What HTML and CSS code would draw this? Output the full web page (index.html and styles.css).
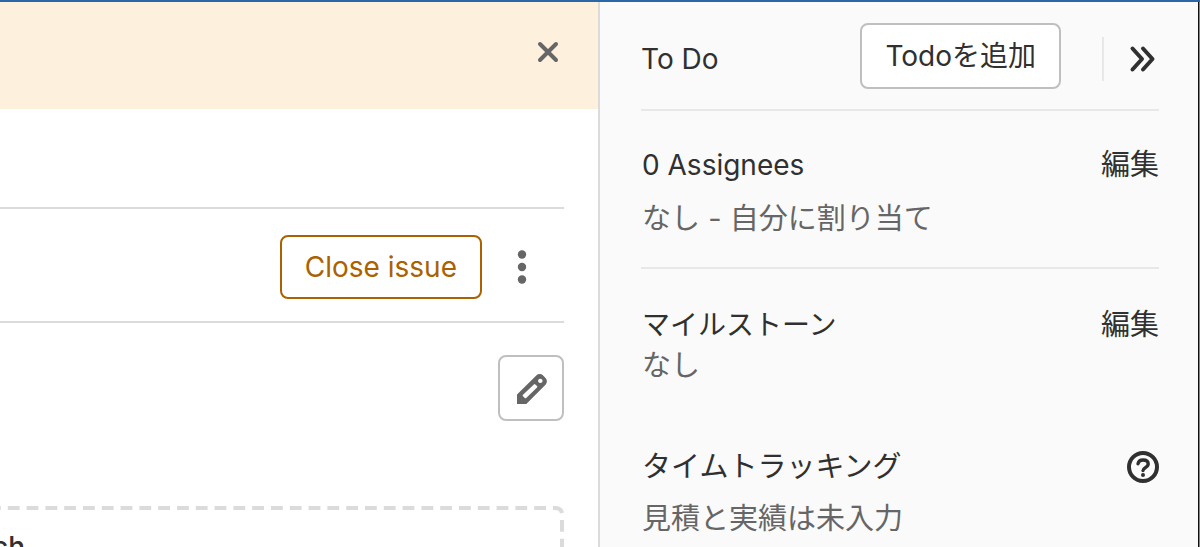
FILE: index.html
```html
<!DOCTYPE html>
<html lang="ja">
<head>
<meta charset="utf-8">
<title>Issue</title>
<link rel="stylesheet" href="styles.css">
</head>
<body>
<div class="app">
  <main class="content">
    <div class="alert">
      <button class="icon-button" aria-label="Close">
        <svg width="32" height="32" viewBox="0 0 32 32"><path d="M8 8l16 16M24 8L8 24" fill="none" stroke="currentColor" stroke-width="4" stroke-linecap="round"/></svg>
      </button>
    </div>
    <div class="issue">
      <div class="issue-actions">
        <button class="button button-warning">Close issue</button>
        <button class="icon-button" aria-label="More actions">
          <svg width="32" height="40" viewBox="0 0 32 40"><g fill="currentColor"><circle cx="16" cy="7.5" r="4.2"/><circle cx="16" cy="20" r="4.2"/><circle cx="16" cy="32.5" r="4.2"/></g></svg>
        </button>
      </div>
      <div class="issue-title">
        <button class="button button-square" aria-label="Edit">
          <svg width="32" height="32" viewBox="0 0 32 32"><path fill="currentColor" fill-rule="evenodd" d="M2 32v-9.500L21.300 3.500a4.800 4.800 0 0 1 6.800 0l2.400 2.400a4.800 4.800 0 0 1 0 6.800L11.300 32zM8 24.200l1.800 1.800a1 1 0 0 0 1.400 0L22 15.500a1 1 0 0 0 0-1.400l-1.700-1.700a1 1 0 0 0-1.400 0L8 22.800a1 1 0 0 0 0 1.400zM25.300 6.700a2.200 2.200 0 1 0 .01 0z"/></svg>
        </button>
      </div>
      <section class="upload">
        <svg class="upload-outline" width="564" height="60" viewBox="0 0 564 60"><g fill="none" stroke="#dbdbdb" stroke-width="4"><path d="M546 2H0" stroke-dasharray="11.8 7"/><path d="M553 2h2q6 0 7 5"/><path d="M562 14V60" stroke-dasharray="11.8 7"/></g></svg>
        <p class="upload-text">ch</p>
      </section>
    </div>
  </main>
  <aside class="sidebar">
    <header class="block todo">
      <span class="todo-label">To Do</span>
      <button class="button">Todoを追加</button>
      <button class="icon-button collapse" aria-label="Collapse sidebar">
        <svg width="32" height="32" viewBox="0 0 32 32"><path d="M5.500 5.500L15 16 5.500 26.500M16 5.500L25.500 16 16 26.500" fill="none" stroke="currentColor" stroke-width="4" stroke-linecap="round" stroke-linejoin="round"/></svg>
      </button>
    </header>
    <section class="block assignees">
      <div class="row"><span>0 Assignees</span><a href="#">編集</a></div>
      <p class="value">なし - 自分に割り当て</p>
    </section>
    <section class="block milestone">
      <div class="row"><span>マイルストーン</span><a href="#">編集</a></div>
      <p class="value">なし</p>
    </section>
    <section class="block tracking">
      <div class="row"><span class="wide">タイムトラッキング</span>
        <button class="icon-button help" aria-label="Help">
          <svg width="32" height="32" viewBox="0 0 32 32"><circle cx="16" cy="16" r="14" fill="none" stroke="currentColor" stroke-width="4"/><path d="M11 12.800C11.500 10.200 13.300 9 16 9c3.200 0 5.200 1.500 5.200 4 0 3.500-5.200 3.600-5.200 6.500" fill="none" stroke="currentColor" stroke-width="3.400" stroke-linecap="round"/><circle cx="16" cy="24" r="2" fill="currentColor"/></svg>
        </button>
      </div>
      <p class="value">見積と実績は未入力</p>
    </section>
  </aside>
  <div class="edge"></div>
</div>
</body>
</html>
```
FILE: styles.css
```css
* { box-sizing: border-box; }

body {
  margin: 0;
  overflow: hidden;
  background: #fff;
  color: #303030;
  font: 28px/40px Inter, "Noto Sans CJK JP", sans-serif;
}

p { margin: 0; }
a { color: inherit; text-decoration: none; }
svg { display: block; }

.app {
  display: flex;
  height: 100vh;
  overflow: hidden;
  border-top: 2px solid #2a66a8;
}

.content { flex: 1; min-width: 0; }

.alert {
  display: flex;
  justify-content: flex-end;
  padding: 34px 34px 41px;
  background: #fdf0dd;
}

.icon-button {
  padding: 0;
  border: 0;
  background: none;
  color: #666;
}

.button {
  height: 66px;
  padding: 0 23px;
  border: 2px solid #bfbfbf;
  border-radius: 8px;
  background: #fff;
  color: inherit;
  font: inherit;
}

.button-warning {
  height: 64px;
  border-color: #ab6100;
  color: #ab6100;
}

.button-square {
  width: 66px;
  padding: 0 15px;
  color: #666;
}

.issue { padding: 98px 34px 0 0; }

.issue-actions {
  display: flex;
  align-items: center;
  justify-content: flex-end;
  gap: 24px;
  height: 116px;
  padding: 4px 26px 0 0;
  border-top: 2px solid #dbdbdb;
  border-bottom: 2px solid #dbdbdb;
}

.issue-title {
  display: flex;
  justify-content: flex-end;
  padding: 32px 0 85px;
}

.upload {
  position: relative;
  height: 60px;
  padding-top: 21px;
  overflow: hidden;
}

.upload-outline { position: absolute; top: 0; right: 0; }

.upload-text { margin-left: -8px; font-weight: 500; }

.sidebar {
  width: 600px;
  padding: 0 39px 0 41px;
  border-left: 2px solid #dbdbdb;
  background: #fafafa;
}

.block { border-bottom: 2px solid #e8e8e8; }

.todo {
  display: flex;
  align-items: center;
  height: 109px;
  padding-top: 6px;
}

.todo .button { margin-bottom: 6px; }

.todo-label { flex: 1; }

.collapse {
  margin-left: 41px;
  padding: 6px 0 6px 23px;
  border-left: 2px solid #e8e8e8;
  color: #303030;
}

.row {
  display: flex;
  align-items: center;
  justify-content: space-between;
  padding-left: 1px;
}

.row a, .row .wide, .value { font-size: 29px; }

.value { padding-left: 1px; color: #666; }

.assignees { padding: 34px 0 28px; }
.assignees .value { margin-top: 14px; }
.milestone { padding: 36px 0 0; border: 0; }
.milestone .value { margin-top: 1px; }
.tracking { padding-top: 61px; border: 0; }
.tracking .value { margin-top: 12px; }

.help { color: #303030; }

.edge {
  width: 2px;
  border-left: 1px solid #111;
  background: #858585;
}
```
